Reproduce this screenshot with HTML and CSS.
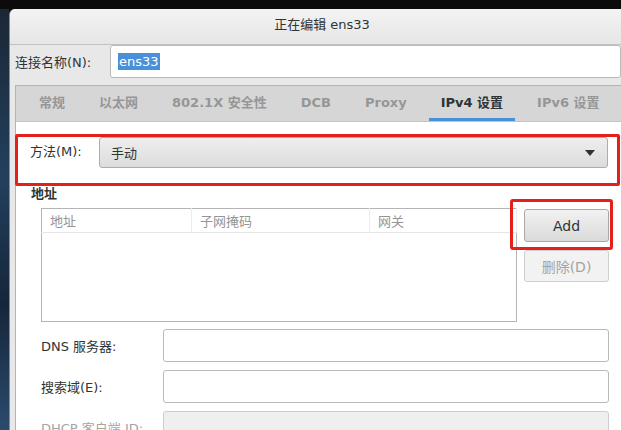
FILE: index.html
```html
<!DOCTYPE html>
<html lang="zh-CN">
<head>
  <meta charset="UTF-8">
  <title>正在编辑 ens33</title>
  <link rel="stylesheet" href="styles.css">
</head>
<body>
  <div class="desktop">
    <!-- Left edge of the desktop behind the dialog -->
    <div class="desk-edge"></div>

    <div class="window">
      <!-- Title bar -->
      <header class="titlebar">正在编辑 ens33</header>

      <!-- Connection name -->
      <div class="name-row">
        <label for="conn-name">连接名称(N):</label>
        <div class="entry name-entry" id="conn-name"><span class="selected">ens33</span></div>
      </div>

      <!-- Notebook -->
      <section class="notebook">
        <nav class="tabs">
          <span class="tab">常规</span>
          <span class="tab">以太网</span>
          <span class="tab">802.1X 安全性</span>
          <span class="tab">DCB</span>
          <span class="tab">Proxy</span>
          <span class="tab active">IPv4 设置</span>
          <span class="tab">IPv6 设置</span>
        </nav>

        <div class="page">
          <!-- Method (highlighted) -->
          <div class="method-row marked">
            <label>方法(M):</label>
            <div class="combo">
              <span>手动</span>
              <span class="arrow"></span>
            </div>
          </div>

          <!-- Addresses -->
          <h3 class="section-title">地址</h3>
          <div class="address-block">
            <table class="addr-table">
              <thead>
                <tr>
                  <th>地址</th>
                  <th>子网掩码</th>
                  <th>网关</th>
                </tr>
              </thead>
              <tbody>
                <tr><td></td><td></td><td></td></tr>
              </tbody>
            </table>
            <div class="addr-buttons">
              <div class="btn-wrap">
                <button class="btn">Add</button>
                <span class="mark-box"></span>
              </div>
              <button class="btn" disabled>删除(D)</button>
            </div>
          </div>

          <!-- Other fields -->
          <div class="field-row">
            <label>DNS 服务器:</label>
            <div class="entry"></div>
          </div>
          <div class="field-row">
            <label>搜索域(E):</label>
            <div class="entry"></div>
          </div>
          <div class="field-row disabled">
            <label>DHCP 客户端 ID:</label>
            <div class="entry"></div>
          </div>
        </div>
      </section>
    </div>
  </div>
</body>
</html>
```

FILE: styles.css
```css
body {
  margin: 0;
  padding: 0;
  background-color: #0b0b0b;
  font-family: "DejaVu Sans", "Noto Sans CJK SC", sans-serif;
  font-size: 13px;
  color: #2e3436;
  overflow: hidden;
}

.desktop {
  display: flex;
  height: 430px;
  padding-top: 9px;
  box-sizing: border-box;
}

.desk-edge {
  width: 9px;
  flex-shrink: 0;
  background: linear-gradient(#1b2735, #22405e 40%, #15263a 70%, #2b4b6e);
}

/* Window */
.window {
  width: 612px;
  flex-shrink: 0;
  background-color: #e8e8e8;
  border-left: 1px solid #8a8a8a;
  border-radius: 6px 0 0 0;
  overflow: hidden;
}

.titlebar {
  height: 35px;
  line-height: 31px;
  padding-left: 12px;
  text-align: center;
  background: linear-gradient(#f3f3f3, #e6e6e6);
  border-bottom: 1px solid #c2c2c2;
  color: #2e3436;
}

.name-row {
  display: flex;
  align-items: center;
  padding: 0 1px 0 5px;
}

.name-row label {
  width: 95px;
  flex-shrink: 0;
}

.entry {
  height: 31px;
  flex: 1;
  background-color: #fff;
  border: 1px solid #b9b9b9;
  border-radius: 3px;
  display: flex;
  align-items: center;
  padding-left: 7px;
}

.selected {
  background-color: #4a90d9;
  color: #fff;
  padding: 1px 1px;
}

/* Notebook */
.notebook {
  margin: 7px 1px 0 5px;
  border: 1px solid #b4b4b4;
  border-right: none;
  border-bottom: none;
  background-color: #fff;
  height: 400px;
}

.tabs {
  display: flex;
  height: 35px;
  background-color: #d6d6d6;
  border-bottom: 1px solid #c4c4c4;
  padding-left: 11px;
  gap: 10px;
}

.tab {
  padding: 0 12px;
  line-height: 34px;
  font-weight: bold;
  color: #969696;
  border-bottom: 3px solid transparent;
  white-space: nowrap;
}

.tab.active {
  color: #2e3436;
  border-bottom-color: #4a90d9;
}

.page {
  padding-top: 12px;
}

.marked {
  border: 3px solid #e3201b;
  border-radius: 2px;
}

.method-row {
  display: flex;
  align-items: flex-start;
  box-sizing: border-box;
  width: 605px;
  margin-left: -1px;
  padding: 0 9px 15px 12px;
}

.method-row label {
  width: 69px;
  flex-shrink: 0;
  line-height: 29px;
}

.combo {
  flex: 1;
  height: 29px;
  display: flex;
  align-items: center;
  justify-content: space-between;
  padding: 0 12px 0 11px;
  background: linear-gradient(#eeeeee, #dcdcdc);
  border: 1px solid #adadad;
  border-radius: 3px;
}

.arrow {
  width: 0;
  height: 0;
  border-left: 5px solid transparent;
  border-right: 5px solid transparent;
  border-top: 6px solid #2e3436;
}

.section-title {
  margin: 0;
  padding-left: 15px;
  font-size: 13px;
  font-weight: bold;
  line-height: 16px;
}

.address-block {
  display: flex;
  align-items: flex-start;
  margin-top: 6px;
  padding-left: 25px;
}

.addr-table {
  width: 476px;
  height: 114px;
  border-collapse: collapse;
  border: 1px solid #b4b4b4;
  table-layout: fixed;
}

.addr-table th {
  height: 23px;
  padding: 0 8px;
  text-align: left;
  font-weight: normal;
  color: #959595;
  border-bottom: 1px solid #e6e6e6;
  border-right: 1px solid #ececec;
}

.addr-table th:nth-child(1) { width: 133px; }
.addr-table th:nth-child(2) { width: 161px; }

.addr-table td {
  border: none;
}

.addr-buttons {
  display: flex;
  flex-direction: column;
  gap: 8px;
  margin-left: 7px;
  margin-top: 1px;
}

.btn-wrap {
  position: relative;
}

.mark-box {
  position: absolute;
  top: -10px;
  left: -14px;
  right: -4px;
  bottom: -8px;
  border: 3px solid #e3201b;
  border-radius: 3px;
}

.btn {
  width: 85px;
  height: 33px;
  font-family: inherit;
  font-size: 14px;
  color: #2e3436;
  background: linear-gradient(#f2f2f2, #dadada);
  border: 1px solid #a9a9a9;
  border-radius: 3px;
}

.btn:disabled {
  height: 32px;
  background: #f2f2f2;
  color: #a3a3a3;
  border-color: #cfcfcf;
}

.field-row {
  display: flex;
  align-items: center;
  margin-top: 7px;
  padding-left: 25px;
  width: 568px;
}

.field-row + .field-row {
  margin-top: 8px;
}

.field-row label {
  width: 122px;
  flex-shrink: 0;
}

.field-row.disabled label {
  color: #a5a5a5;
}

.field-row.disabled .entry {
  background-color: #efefef;
  border-color: #cdcdcd;
}
```
